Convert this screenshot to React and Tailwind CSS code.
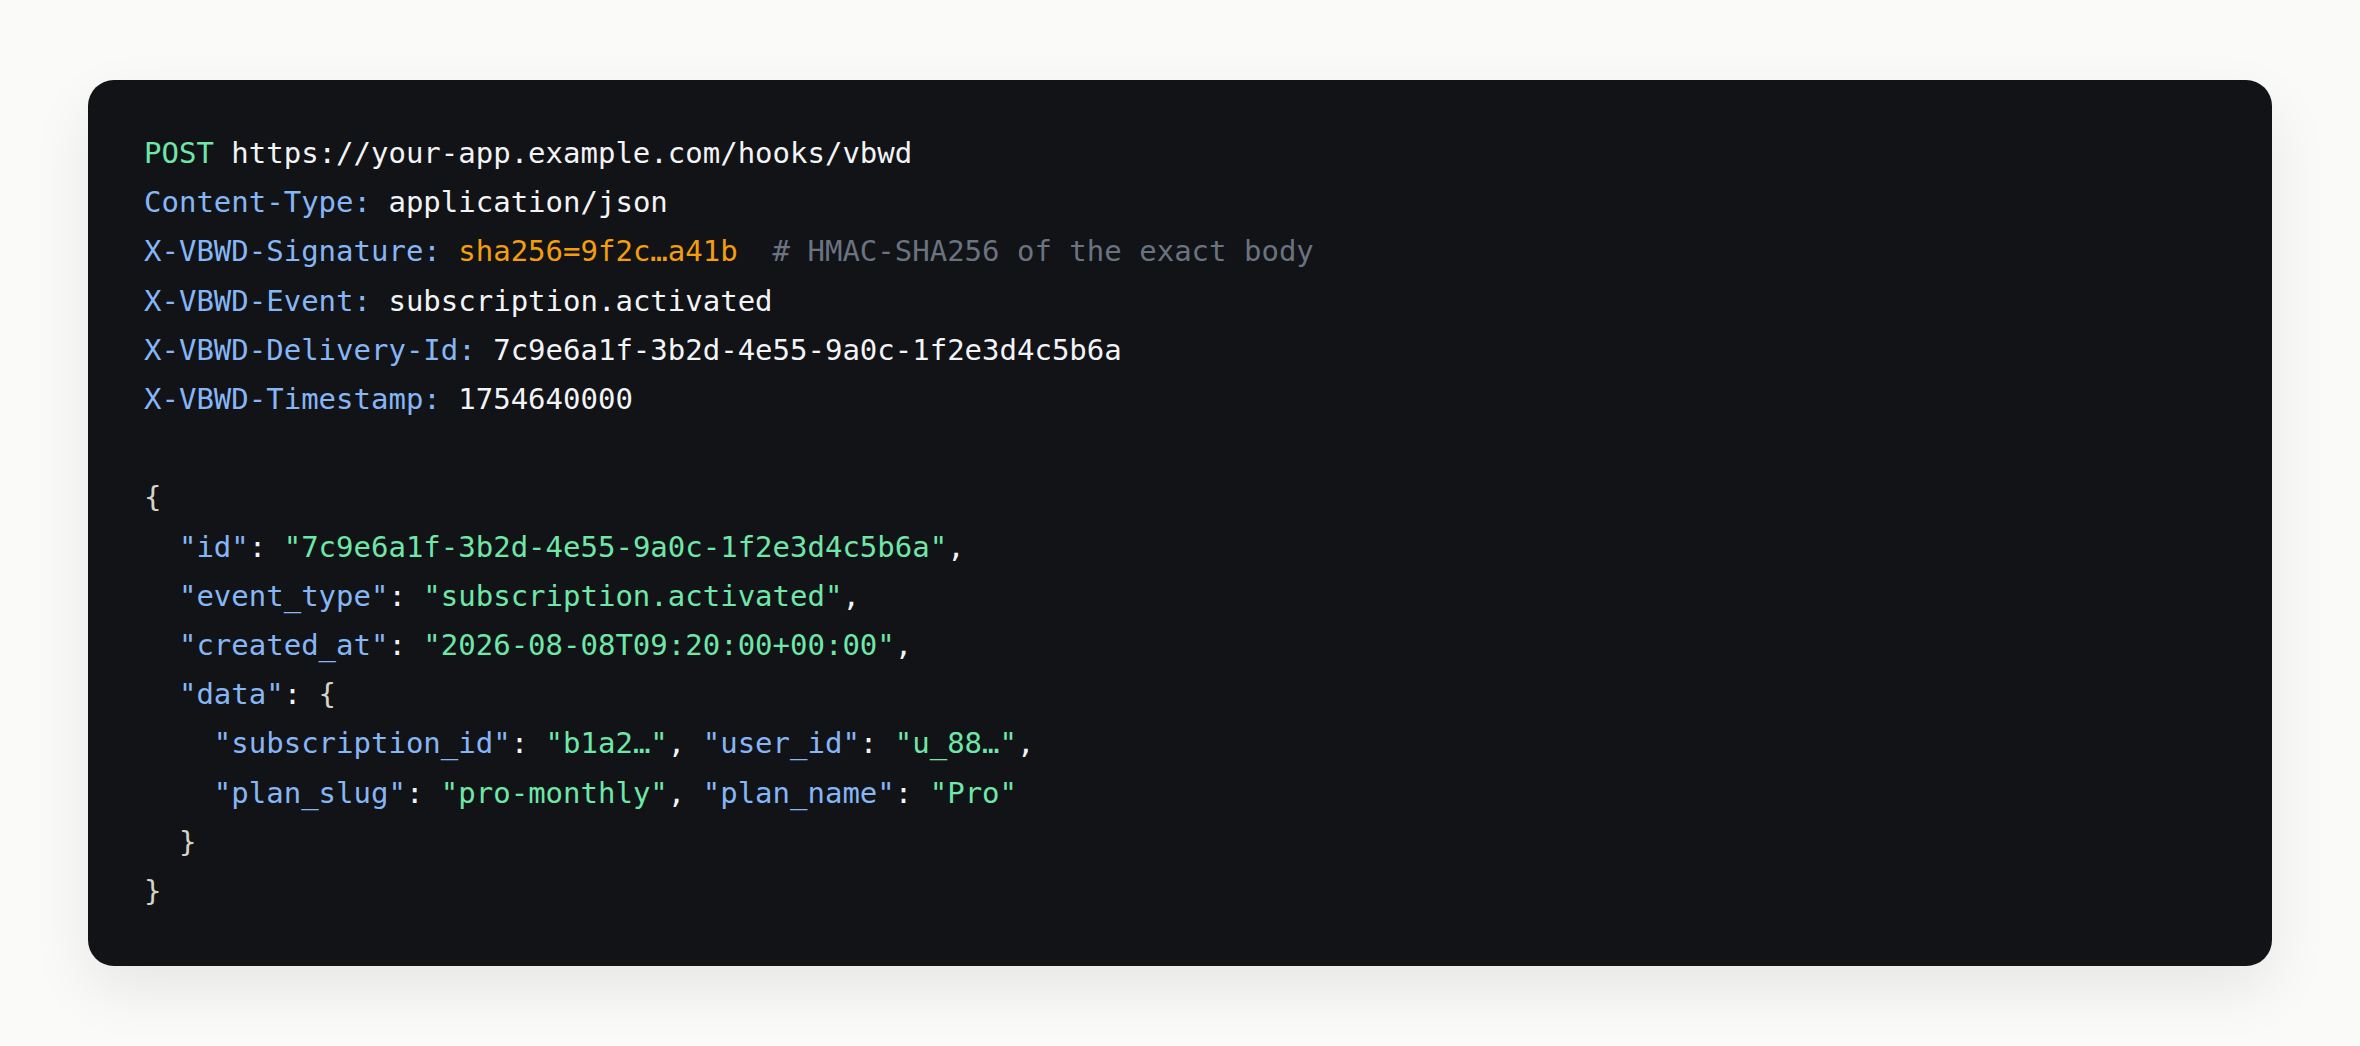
const K = ({ children }) => <span className="text-[#86b6f6]">{children}</span>;
const S = ({ children }) => <span className="text-[#6ee7a8]">{children}</span>;
const B = ({ children }) => <span className="text-[#d6d3c6]">{children}</span>;

export default function App() {
  return (
    <div className="min-h-screen bg-[#fafaf9] px-[88px] pt-[80px] pb-[80px]">
      <pre
        className="m-0 rounded-[26px] bg-[#111317] px-[56px] pt-[49px] pb-[50px] text-[29px] leading-[49.2px] text-[#f3f4f6] shadow-[0_24px_60px_rgba(0,0,0,0.08)] whitespace-pre"
        style={{ fontFamily: '"DejaVu Sans Mono", "Liberation Mono", monospace' }}
      >
        <div>
          <span className="text-[#6ee7a8]">POST</span> https://your-app.example.com/hooks/vbwd
        </div>
        <div>
          <K>Content-Type:</K> application/json
        </div>
        <div>
          <K>X-VBWD-Signature:</K> <span className="text-[#f59e0b]">sha256=9f2c…a41b</span>
          {"  "}
          <span className="text-[#6b7280]"># HMAC-SHA256 of the exact body</span>
        </div>
        <div>
          <K>X-VBWD-Event:</K> subscription.activated
        </div>
        <div>
          <K>X-VBWD-Delivery-Id:</K> 7c9e6a1f-3b2d-4e55-9a0c-1f2e3d4c5b6a
        </div>
        <div>
          <K>X-VBWD-Timestamp:</K> 1754640000
        </div>
        <div>{" "}</div>
        <div>
          <B>{"{"}</B>
        </div>
        <div>
          {"  "}
          <K>"id"</K>: <S>"7c9e6a1f-3b2d-4e55-9a0c-1f2e3d4c5b6a"</S>,
        </div>
        <div>
          {"  "}
          <K>"event_type"</K>: <S>"subscription.activated"</S>,
        </div>
        <div>
          {"  "}
          <K>"created_at"</K>: <S>"2026-08-08T09:20:00+00:00"</S>,
        </div>
        <div>
          {"  "}
          <K>"data"</K>: <B>{"{"}</B>
        </div>
        <div>
          {"    "}
          <K>"subscription_id"</K>: <S>"b1a2…"</S>, <K>"user_id"</K>: <S>"u_88…"</S>,
        </div>
        <div>
          {"    "}
          <K>"plan_slug"</K>: <S>"pro-monthly"</S>, <K>"plan_name"</K>: <S>"Pro"</S>
        </div>
        <div>
          {"  "}
          <B>{"}"}</B>
        </div>
        <div>
          <B>{"}"}</B>
        </div>
      </pre>
    </div>
  );
}
